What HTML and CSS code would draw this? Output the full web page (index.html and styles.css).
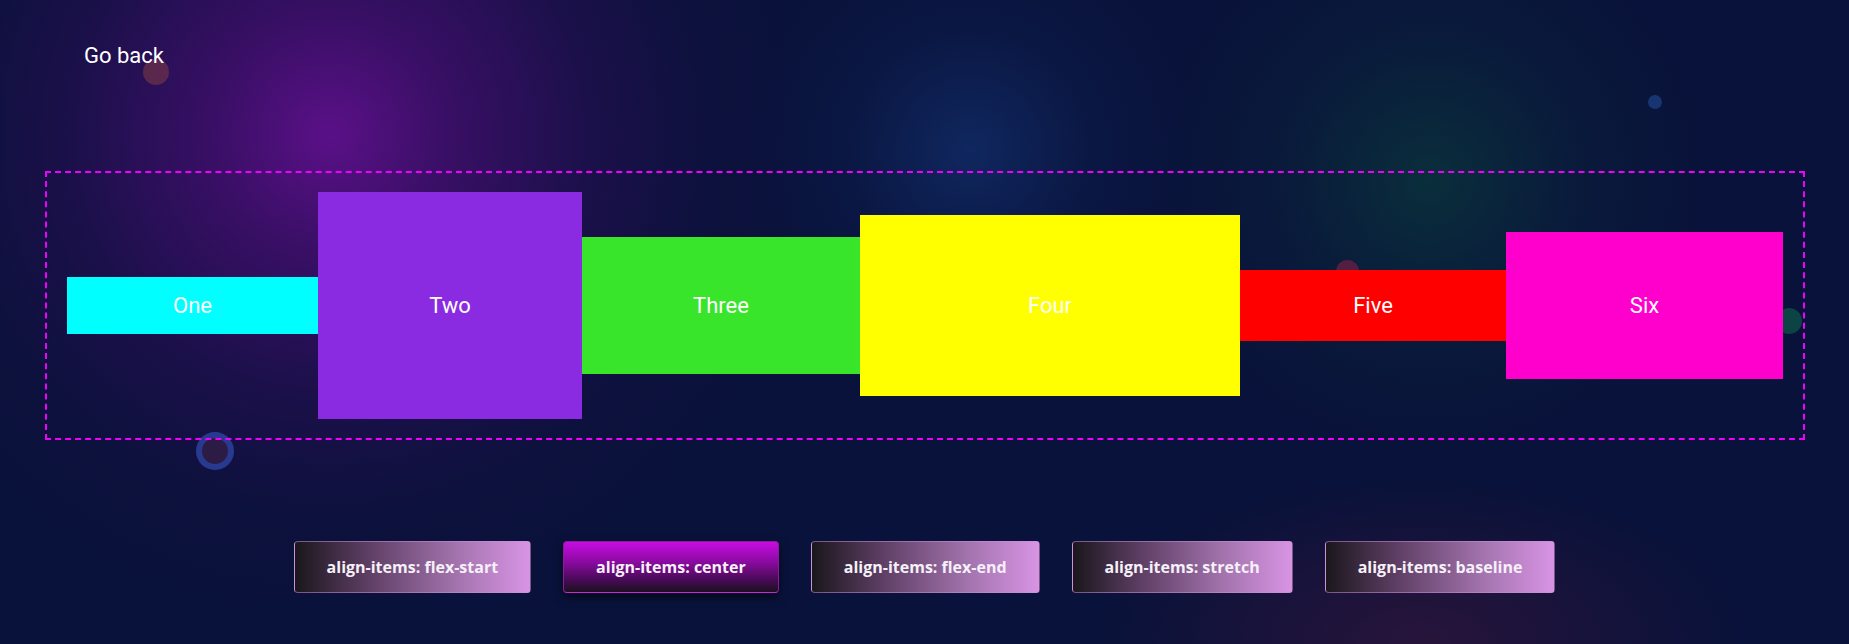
FILE: index.html
```html
<!DOCTYPE html>
<html lang="en">
<head>
<meta charset="utf-8">
<title>align-items</title>
<link rel="stylesheet" href="styles.css">
</head>
<body>
<div class="bubbles" aria-hidden="true">
  <span class="bubble bubble-brown"></span>
  <span class="bubble bubble-ring"></span>
  <span class="bubble bubble-blue"></span>
  <span class="bubble bubble-red"></span>
  <span class="bubble bubble-green"></span>
</div>
<div class="page">
  <header class="topbar">
    <a class="back" href="#">Go back</a>
  </header>
  <section class="flex-box">
    <div class="item item-one">One</div>
    <div class="item item-two">Two</div>
    <div class="item item-three">Three</div>
    <div class="item item-four">Four</div>
    <div class="item item-five">Five</div>
    <div class="item item-six">Six</div>
  </section>
  <nav class="controls">
    <button class="ctrl">align-items: flex-start</button>
    <button class="ctrl ctrl-active">align-items: center</button>
    <button class="ctrl">align-items: flex-end</button>
    <button class="ctrl">align-items: stretch</button>
    <button class="ctrl">align-items: baseline</button>
  </nav>
</div>
</body>
</html>
```
FILE: styles.css
```css
html, body {
  margin: 0;
  height: 100%;
  overflow: hidden;
}
body {
  position: relative;
  font-family: Roboto, "Liberation Sans", sans-serif;
  color: #fff;
  background-color: #09123a;
  background-image:
    radial-gradient(circle at 330px 135px, rgba(95, 16, 140, 0.95) 0px, rgba(72, 14, 115, 0.75) 120px, rgba(45, 14, 90, 0.5) 260px, rgba(25, 14, 70, 0.25) 380px, rgba(9, 18, 58, 0) 480px),
    radial-gradient(circle at 970px 150px, rgba(18, 48, 110, 0.7) 0px, rgba(14, 36, 90, 0.3) 120px, rgba(9, 18, 58, 0) 220px),
    radial-gradient(circle at 1430px 180px, rgba(10, 58, 60, 0.7) 0px, rgba(10, 44, 60, 0.3) 150px, rgba(9, 18, 58, 0) 280px),
    radial-gradient(ellipse 320px 160px at 1420px 640px, rgba(70, 22, 60, 0.5) 0px, rgba(9, 18, 58, 0) 100%);
}

.bubbles {
  position: absolute;
  inset: 0;
  z-index: 0;
  pointer-events: none;
}
.bubble {
  position: absolute;
  border-radius: 50%;
}
.bubble-brown {
  left: 143px;
  top: 59px;
  width: 26px;
  height: 26px;
  background: rgba(130, 60, 70, 0.55);
}
.bubble-ring {
  left: 196px;
  top: 432px;
  width: 26px;
  height: 26px;
  border: 6px solid rgba(40, 70, 170, 0.75);
  background: rgba(48, 30, 70, 0.9);
}
.bubble-blue {
  left: 1648px;
  top: 95px;
  width: 14px;
  height: 14px;
  background: rgba(30, 60, 130, 0.8);
}
.bubble-red {
  left: 1336px;
  top: 260px;
  width: 23px;
  height: 23px;
  background: rgba(110, 30, 70, 0.75);
}
.bubble-green {
  left: 1776px;
  top: 308px;
  width: 26px;
  height: 26px;
  background: rgba(14, 80, 70, 0.8);
}

.page {
  position: relative;
  z-index: 1;
  padding: 0 44px 0 45px;
}

.topbar {
  padding: 43px 0 0 39px;
  height: 171px;
  box-sizing: border-box;
}
.back {
  font-size: 22px;
  line-height: 26px;
  color: #fff;
  text-decoration: none;
}

.flex-box {
  display: flex;
  align-items: center;
  padding: 20px;
  border: 2px dashed #ee00ff;
  height: 269px;
  box-sizing: border-box;
}

.item {
  flex: none;
  display: flex;
  align-items: center;
  justify-content: center;
  font-size: 22px;
  color: #fff;
}
.item-one   { width: 251px; height: 57px;  background: #00ffff; }
.item-two   { width: 264px; height: 227px; background: #8a2be2; }
.item-three { width: 278px; height: 137px; background: #38e52a; }
.item-four  { width: 380px; height: 181px; background: #ffff00; }
.item-five  { width: 266px; height: 71px;  background: #ff0000; }
.item-six   { width: 277px; height: 147px; background: #ff00cc; }

.controls {
  display: flex;
  justify-content: center;
  gap: 32px;
  margin-top: 101px;
  margin-left: -45px;
  margin-right: -44px;
}
.ctrl {
  font-family: "Open Sans", "Noto Sans", sans-serif;
  font-weight: 700;
  font-size: 16px;
  line-height: 20px;
  padding: 15px 32px;
  color: #f6f0f8;
  border: 1px solid rgba(200, 140, 215, 0.55);
  border-radius: 4px;
  background: linear-gradient(to right, #1a171c 0%, #5c3d62 30%, #a575b0 70%, #d894e4 100%);
  cursor: pointer;
}
.ctrl-active {
  border-color: #8a1a9a;
  border-bottom-color: #c42ad8;
  background: linear-gradient(to bottom, #c70ce2 0%, #8a0aa0 40%, #4a0a58 75%, #1c1020 100%);
  box-shadow: 0 4px 10px rgba(0, 0, 0, 0.55);
}
```
